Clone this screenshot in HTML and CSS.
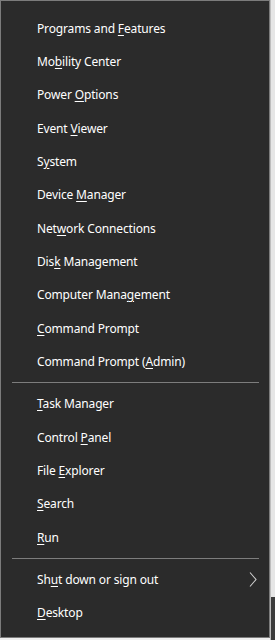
FILE: index.html
```html
<!DOCTYPE html>
<html lang="en">
<head>
  <meta charset="UTF-8">
  <title>Quick Link Menu</title>
  <link rel="stylesheet" href="styles.css">
</head>
<body>
  <div class="screen">
    <div class="menu">
      <div class="item"><span>Programs and <u>F</u>eatures</span></div>
      <div class="item"><span>Mo<u>b</u>ility Center</span></div>
      <div class="item"><span>Power <u>O</u>ptions</span></div>
      <div class="item"><span>Event <u>V</u>iewer</span></div>
      <div class="item"><span>S<u>y</u>stem</span></div>
      <div class="item"><span>Device <u>M</u>anager</span></div>
      <div class="item"><span>Net<u>w</u>ork Connections</span></div>
      <div class="item"><span>Dis<u>k</u> Management</span></div>
      <div class="item"><span>Computer Mana<u>g</u>ement</span></div>
      <div class="item"><span><u>C</u>ommand Prompt</span></div>
      <div class="item"><span>Command Prompt (<u>A</u>dmin)</span></div>

      <div class="separator"></div>

      <div class="item"><span><u>T</u>ask Manager</span></div>
      <div class="item"><span>Control <u>P</u>anel</span></div>
      <div class="item"><span>File <u>E</u>xplorer</span></div>
      <div class="item"><span><u>S</u>earch</span></div>
      <div class="item"><span><u>R</u>un</span></div>

      <div class="separator"></div>

      <div class="item has-sub">
        <span>Sh<u>u</u>t down or sign out</span>
        <svg class="chevron" width="8" height="15" viewBox="0 0 8 15">
          <path d="M1 0.5 L7 7.5 L1 14.5" fill="none" stroke="#d0d0d0" stroke-width="1.1"/>
        </svg>
      </div>
      <div class="item"><span><u>D</u>esktop</span></div>
    </div>

    <div class="behind">
      <div class="behind-light"></div>
      <div class="behind-dark"></div>
    </div>
  </div>
</body>
</html>
```

FILE: styles.css
```css
body {
  margin: 0;
  padding: 0;
  background-color: #f0f0f0;
  font-family: "Noto Sans", "Open Sans", sans-serif;
}
.screen {
  display: flex;
  height: 640px;
}
.menu {
  width: 270px;
  height: 638px;
  box-sizing: border-box;
  background-color: #2b2b2b;
  border: 1px solid #7c7c7c;
  padding: 10.5px 0 0 0;
  flex-shrink: 0;
}
.item {
  height: 33.33px;
  display: flex;
  align-items: center;
  padding-left: 36px;
  padding-right: 12px;
  color: #ffffff;
  font-size: 12px;
  letter-spacing: -0.15px;
  white-space: nowrap;
}
.item u {
  text-underline-offset: 2px;
}
.has-sub {
  justify-content: space-between;
}
.chevron {
  display: block;
  margin-top: 1px;
}
.separator {
  height: 1px;
  margin: 4px 10px 4px 11px;
  background-color: #7d7d7d;
}
.behind {
  flex: 1;
  display: flex;
  flex-direction: column;
  border-left: 1px solid #bdbdbd;
}
.behind-light {
  height: 597px;
  background-color: #e6e6e6;
}
.behind-dark {
  flex: 1;
  background-color: #3c3c3c;
}
```
